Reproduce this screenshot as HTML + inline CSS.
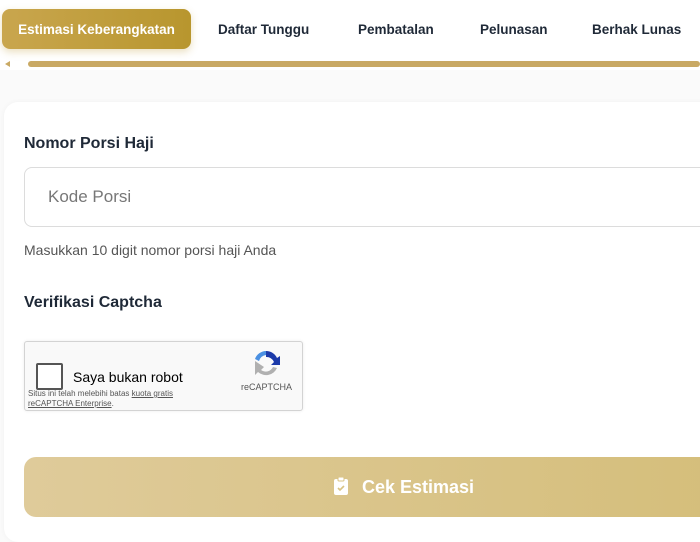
<!DOCTYPE html>
<html><head><meta charset="utf-8"><style>
*{box-sizing:border-box;margin:0;padding:0}
body{width:700px;height:524px;overflow:hidden;background:#fafafa;font-family:"Liberation Sans",sans-serif;position:relative}
.top{position:absolute;left:0;top:0;width:700px;height:70px;background:#fff}
.tab{position:absolute;top:9px;height:40px;line-height:42px;font-size:13.5px;font-weight:bold;color:#1f2937}
.act{left:2px;width:189px;text-align:center;color:#fff;border-radius:8px;background:linear-gradient(90deg,#c9a64e,#b8962e);box-shadow:0 3px 8px rgba(184,150,46,.3)}
.bar{position:absolute;left:28px;top:61px;width:672px;height:6px;border-radius:3px;background:#c9a964}
.arr{position:absolute;left:5px;top:61px;width:0;height:0;border-top:3px solid transparent;border-bottom:3px solid transparent;border-right:5px solid #c9a964}
.card{position:absolute;left:4px;top:102px;width:710px;height:440px;background:#fff;border-radius:14px;box-shadow:0 0 6px rgba(0,0,0,.04)}
.lbl{position:absolute;left:24px;font-size:16px;font-weight:bold;color:#1f2937}
.inp{position:absolute;left:24px;top:167px;width:690px;height:60px;border:1px solid #dcdcdc;border-radius:8px;background:#fff;font-size:17px;color:#777;padding-left:23px;line-height:58px}
.hint{position:absolute;left:24px;top:242px;font-size:14px;color:#555}
.cap{position:absolute;left:24px;top:341px;width:279px;height:70px;background:#f9f9f9;border:1px solid #d3d3d3;border-radius:3px;box-shadow:0 0 3px rgba(0,0,0,.08)}
.cb{position:absolute;left:11px;top:21px;width:27px;height:27px;border:2px solid #555;border-radius:2px;background:#fff}
.btn{position:absolute;left:24px;top:457px;width:760px;height:60px;border-radius:12px;background:linear-gradient(90deg,#dfcb9a,#d4bd78);color:#fff;font-size:18px;font-weight:bold;text-align:center;line-height:60px}
</style></head><body>
<div class="top">
<div class="tab act">Estimasi Keberangkatan</div>
<div class="tab" style="left:218px">Daftar Tunggu</div>
<div class="tab" style="left:358px">Pembatalan</div>
<div class="tab" style="left:480px">Pelunasan</div>
<div class="tab" style="left:592px">Berhak Lunas</div>
<div class="arr"></div><div class="bar"></div>
</div>
<div class="card"></div>
<div class="lbl" style="top:135px">Nomor Porsi Haji</div>
<div class="inp">Kode Porsi</div>
<div class="hint">Masukkan 10 digit nomor porsi haji Anda</div>
<div class="lbl" style="top:294px">Verifikasi Captcha</div>
<div class="cap">
<div class="cb"></div>
<div style="position:absolute;left:48px;top:27px;font-size:14px;color:#000">Saya bukan robot</div>
<div style="position:absolute;left:3px;top:47px;font-size:8px;color:#555;line-height:10px">Situs ini telah melebihi batas <u>kuota gratis</u><br><u>reCAPTCHA Enterprise</u>.</div>
<svg style="position:absolute;left:226px;top:6px" width="30" height="30" viewBox="0 0 30 30">
<path d="M15 3a12 12 0 0 1 11 7l3-2v9h-9l3-3a8 8 0 0 0-8-5z" fill="#1c3aa9"/>
<path d="M15 3a12 12 0 0 0-11 8l4 2a8 8 0 0 1 7-6z" fill="#4a90e2"/>
<path d="M4 13v14l3-3a12 12 0 0 0 19-4l-4-1a8 8 0 0 1-12 3l3-3z" fill="#b0b0b0"/>
</svg>
<div style="position:absolute;left:216px;top:40px;font-size:9px;color:#555">reCAPTCHA</div>
</div>
<div class="btn"><svg width="14" height="18" viewBox="0 0 14 18" style="vertical-align:-2px;margin-right:14px"><rect x="0" y="2" width="14" height="16" rx="2" fill="#fff"/><rect x="4" y="0" width="6" height="4" rx="1" fill="#fff" stroke="#d8c384"/><path d="M4 11l2 2 4-4" stroke="#d8c384" stroke-width="1.6" fill="none"/></svg>Cek Estimasi</div>
</body></html>
